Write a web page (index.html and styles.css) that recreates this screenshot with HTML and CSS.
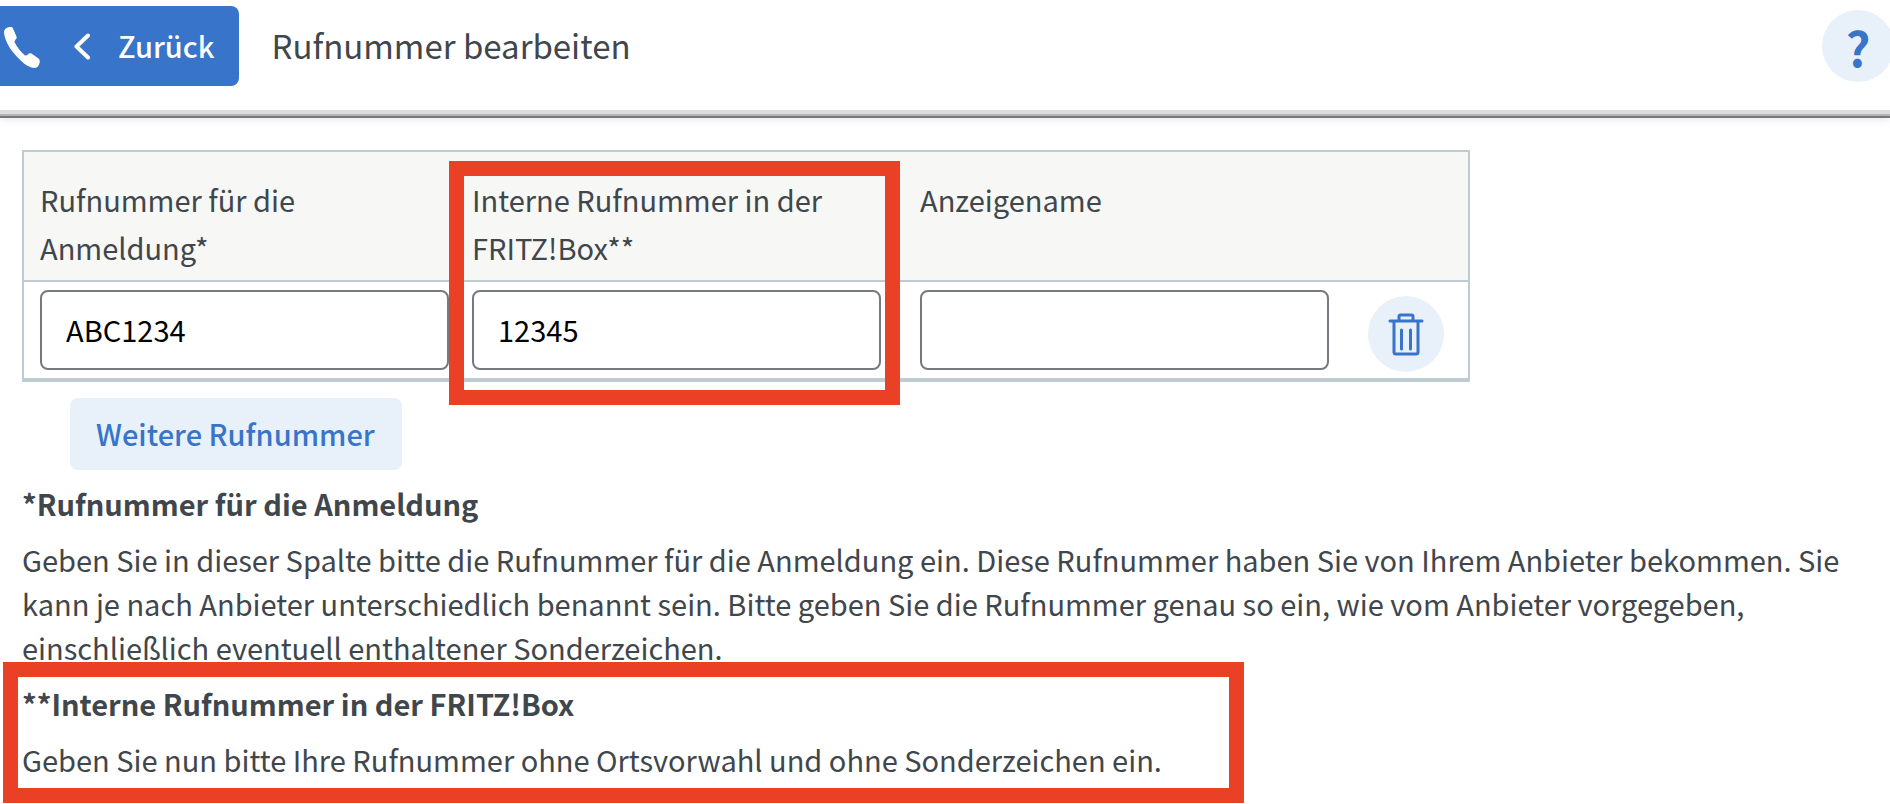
FILE: index.html
```html
<!DOCTYPE html>
<html lang="de">
<head>
<meta charset="utf-8">
<meta name="viewport" content="width=device-width, initial-scale=1">
<title>Rufnummer bearbeiten</title>
<link rel="stylesheet" href="styles.css">
</head>
<body>
<header class="topbar">
  <button class="back" type="button">
    <svg class="phone" viewBox="0 0 40 44" aria-hidden="true"><path d="M4 8C4 4 10 2 12.500 3.500L16.500 12.500C17.500 15 14.500 15.500 14.500 18C17 23 20.500 28 25 31.500C27.500 32 28.500 28 31.500 29.500L38.500 34.500C41 36.500 39.500 42 36.500 43.500C33 45 27 42 23.500 39C14 31 4.500 19 4 8Z"/></svg>
    <svg class="chevron" viewBox="0 0 16 28" aria-hidden="true"><path d="M14 3.500L2.500 14.500L14 25.500"/></svg>
    <span class="back-label">Zurück</span>
  </button>
  <h1 class="title">Rufnummer bearbeiten</h1>
  <button class="help" type="button" aria-label="Hilfe">?</button>
</header>
<main class="content">
  <table class="numbers">
    <thead>
      <tr>
        <th class="col-login" id="login">Rufnummer für die Anmeldung*</th>
        <th class="col-internal marked" id="internal">Interne Rufnummer in der FRITZ!Box**</th>
        <th class="col-name" id="name">Anzeigename</th>
        <th class="col-action"></th>
      </tr>
    </thead>
    <tbody>
      <tr>
        <td><input class="field" type="text" value="ABC1234" aria-labelledby="login"></td>
        <td><input class="field" type="text" value="12345" aria-labelledby="internal"></td>
        <td><input class="field" type="text" aria-labelledby="name"></td>
        <td class="action"><button class="delete" type="button" aria-label="Löschen"><svg viewBox="0 0 36 44" aria-hidden="true"><path d="M2 9H34M11 8V4.500Q11 3 12.500 3H23.500Q25 3 25 4.500V8M6 10V40Q6 42 8 42H28Q30 42 30 40V10M13.500 18V37M22.500 18V37"/></svg></button></td>
      </tr>
    </tbody>
  </table>
  <button class="more" type="button">Weitere Rufnummer</button>
  <section class="note">
    <h2>*Rufnummer für die Anmeldung</h2>
    <p>Geben Sie in dieser Spalte bitte die Rufnummer für die Anmeldung ein. Diese Rufnummer haben Sie von Ihrem Anbieter bekommen. Sie kann je nach Anbieter unterschiedlich benannt sein. Bitte geben Sie die Rufnummer genau so ein, wie vom Anbieter vorgegeben, einschließlich eventuell enthaltener Sonderzeichen.</p>
  </section>
  <section class="note note-marked">
    <h2>**Interne Rufnummer in der FRITZ!Box</h2>
    <p>Geben Sie nun bitte Ihre Rufnummer ohne Ortsvorwahl und ohne Sonderzeichen ein.</p>
  </section>
</main>
</body>
</html>
```
FILE: styles.css
```css
*, *::after { box-sizing: border-box; }
body {
  margin: 0;
  overflow-x: hidden;
  background: #fff;
  color: #3f464c;
  font: 400 29px/44px "Noto Sans CJK SC", "Noto Sans", sans-serif;
}
button, input { font: inherit; margin: 0; }
button { border: 0; cursor: pointer; }
.topbar {
  display: flex;
  align-items: flex-start;
  padding-top: 6px;
  height: 118px;
  border-bottom: 2px solid #77777b;
  box-shadow: inset 0 -2px #b4b4b7, inset 0 -6px #dcdcde, 0 2px 8px #00000018;
}
.back {
  display: flex;
  align-items: center;
  height: 80px;
  padding: 0 25px 0 0;
  border-radius: 0 8px 8px 0;
  background: #3874c9;
  color: #fff;
  font-weight: 500;
}
.back-label { padding-bottom: 2px; }
.phone { width: 40px; height: 44px; fill: #fff; }
.chevron { width: 16px; height: 28px; margin: 0 28px 0 34px; }
.chevron path { fill: none; stroke: #fff; stroke-width: 4; stroke-linecap: round; stroke-linejoin: round; }
.title { margin: 0 0 0 32px; font-size: 33px; font-weight: 400; line-height: 78px; }
.help {
  flex: none;
  width: 72px;
  height: 72px;
  margin: 4px -4px 0 auto;
  padding: 0;
  border-radius: 50%;
  background: #e8f1f9;
  color: #3874c9;
  font-size: 48px;
  font-weight: 700;
  line-height: 68px;
}
.content { padding: 32px 0 22px 22px; }
.numbers {
  border: 2px solid #becbd3;
  border-bottom-width: 4px;
  border-spacing: 0;
}
.numbers th {
  position: relative;
  height: 130px;
  padding: 23px 0 8px 16px;
  border-bottom: 2px solid #becbd3;
  background: #f7f7f5;
  font-weight: 400;
  line-height: 48px;
  text-align: left;
  vertical-align: top;
}
.numbers td { padding: 8px 0 8px 16px; }
.col-login { width: 432px; }
.col-internal, .col-name { width: 448px; }
.col-action { width: 116px; }
.marked::after {
  content: "";
  position: absolute;
  z-index: 1;
  inset: 9px 4px -125px -7px;
  border: 15px solid #ea4025;
  pointer-events: none;
}
.field {
  display: block;
  width: 409px;
  height: 80px;
  padding: 0 24px 2px;
  border: 2px solid #76797f;
  border-radius: 8px;
  background: #fff;
  color: #000;
}
.numbers .action { padding-bottom: 6px; vertical-align: bottom; }
.delete {
  display: grid;
  place-items: center;
  width: 76px;
  height: 76px;
  padding: 0;
  border-radius: 50%;
  background: #e8f1f9;
}
.delete svg { width: 36px; height: 44px; fill: none; stroke: #3874c9; stroke-width: 3; stroke-linecap: round; }
.more {
  display: block;
  height: 72px;
  margin: 16px 0 0 48px;
  padding: 0 27px 2px 26px;
  border-radius: 8px;
  background: #e8f1f9;
  color: #3874c9;
  font-weight: 500;
}
.note { position: relative; padding: 11px 0 1px; }
.note h2 { margin: 0; font-size: 29px; font-weight: 700; line-height: 44px; }
.note p { margin: 12px 0 0; }
.note-marked::after {
  content: "";
  position: absolute;
  left: -19px;
  top: -8px;
  bottom: -21px;
  width: 1241px;
  border: 15px solid #ea4025;
  pointer-events: none;
}
```
